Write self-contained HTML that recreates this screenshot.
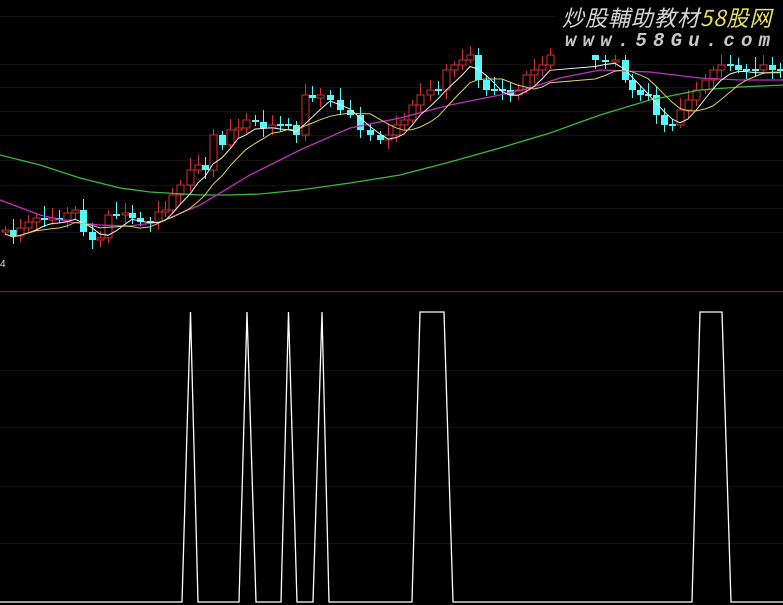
<!DOCTYPE html>
<html><head><meta charset="utf-8"><style>
html,body{margin:0;padding:0;background:#000;width:783px;height:605px;overflow:hidden}
svg{position:absolute;left:0;top:0}
.wm1{position:absolute;left:562px;top:4px;font:italic 22px "Noto Sans CJK SC","WenQuanYi Zen Hei",sans-serif;color:#d8d8d8;letter-spacing:1px;white-space:nowrap;line-height:26px}
.wm1 span{color:#e8e060}
.wm2{position:absolute;left:565px;top:30px;font:italic bold 19px "Liberation Mono",monospace;color:#c8c8c8;letter-spacing:6.2px;white-space:nowrap;line-height:22px}
.n4{position:absolute;left:0;top:259px;font:10px "Liberation Sans",sans-serif;color:#ddd}
</style></head><body>
<svg id="s" width="783" height="605" viewBox="0 0 783 605" xmlns="http://www.w3.org/2000/svg">
<g stroke="#131313" stroke-width="1">
<line x1="0" y1="16.5" x2="783" y2="16.5"/><line x1="0" y1="64.5" x2="783" y2="64.5"/><line x1="0" y1="87.5" x2="783" y2="87.5"/><line x1="0" y1="111.5" x2="783" y2="111.5"/><line x1="0" y1="135.5" x2="783" y2="135.5"/><line x1="0" y1="160.5" x2="783" y2="160.5"/><line x1="0" y1="185.5" x2="783" y2="185.5"/><line x1="0" y1="208.5" x2="783" y2="208.5"/><line x1="0" y1="232.5" x2="783" y2="232.5"/>
<line x1="0" y1="370.5" x2="783" y2="370.5"/><line x1="0" y1="427.5" x2="783" y2="427.5"/><line x1="0" y1="486.5" x2="783" y2="486.5"/><line x1="0" y1="543.5" x2="783" y2="543.5"/>
</g>
<line x1="0" y1="291.5" x2="783" y2="291.5" stroke="#6a1e2c" stroke-width="1.5"/>
<g id="c"></g>
<polyline fill="none" stroke="#3cb83c" stroke-width="1.3" points="0,155 40,165 80,178 120,188 150,192 200,195 230,195 260,194 300,190 350,183 400,175 450,162 500,148 550,133 600,115 650,100 700,90 740,87 783,85"/>
<polyline fill="none" stroke="#c030c0" stroke-width="1.3" points="0,200 40,215 70,222 100,225 130,226 160,222 200,205 250,175 300,150 350,128 400,118 450,105 500,95 530,88 560,78 600,70 650,72 700,78 740,80 783,80"/>
<polyline id="m5" fill="none" stroke="#f0f0f0" stroke-width="1"/>
<polyline id="m10" fill="none" stroke="#e0d060" stroke-width="1"/>
<rect x="555" y="0" width="228" height="55" fill="#000"/>
<polyline fill="none" stroke="#fff" stroke-width="1.3" points="0,602 182,602 190.5,312 198,602 239,602 247,312 256,602 281,602 288.5,312 297,602 313,602 322,312 329,602 412,602 420,312 444,312 453,602 692,602 700,312 722,312 731,602 783,602"/>
</svg>
<div class="wm1">炒股輔助教材<span>58股网</span></div>
<div class="wm2">www.58Gu.com</div>
<div class="n4">4</div>
<script>
var P=[[5,230],[13,236],[20,228],[28,222],[36,218],[44,220],[52,218],[59,220],[67,213],[75,210],[83,232],[92,240],[100,238],[108,215],[116,215],[125,213],[132,218],[140,222],[150,222],[158,212],[165,210],[172,195],[180,185],[190,170],[198,165],[205,170],[213,135],[222,145],[230,130],[238,128],[246,120],[255,122],[263,128],[272,125],[280,125],[288,125],[296,135],[305,95],[312,98],[320,95],[330,100],[340,110],[350,115],[360,130],[370,135],[380,140],[388,135],[396,125],[404,120],[412,105],[420,95],[430,90],[438,90],[446,70],[454,65],[462,60],[470,55],[478,80],[486,90],[494,90],[502,90],[510,95],[518,90],[526,75],[534,70],[542,65],[550,55],[595,60],[605,62],[615,60],[625,80],[632,90],[640,95],[648,95],[656,115],[664,125],[672,125],[680,110],[688,100],[696,90],[705,80],[713,70],[721,65],[730,65],[738,70],[746,70],[755,70],[763,65],[772,70],[780,70]];
var g=document.getElementById('c'),h='',prev=232;
for(var i=0;i<P.length;i++){var x=P[i][0],y=P[i][1],t=Math.min(prev,y),b=Math.max(prev,y);if(b-t<2){t-=1;b+=1;}
var up=y<prev;var hi=t-4-(i*7%9),lo=b+3+(i*5%7);
if(up){h+='<line x1="'+(x+0.5)+'" y1="'+hi+'" x2="'+(x+0.5)+'" y2="'+lo+'" stroke="#d03030"/><rect x="'+(x-3)+'" y="'+t+'" width="7" height="'+(b-t)+'" fill="#000" stroke="#d03030"/>';}
else{h+='<line x1="'+(x+0.5)+'" y1="'+hi+'" x2="'+(x+0.5)+'" y2="'+lo+'" stroke="#54f8f8"/><rect x="'+(x-3)+'" y="'+t+'" width="7" height="'+(b-t)+'" fill="#54f8f8"/>';}
prev=y;}
g.innerHTML=h;
function ma(n){var s=[];for(var i=0;i<P.length;i++){var a=0,c=0;for(var j=Math.max(0,i-n+1);j<=i;j++){a+=P[j][1];c++;}s.push(P[i][0]+','+(a/c+4).toFixed(1));}return s.join(' ');}
document.getElementById('m5').setAttribute('points',ma(4));
document.getElementById('m10').setAttribute('points',ma(8));
</script>
</body></html>
